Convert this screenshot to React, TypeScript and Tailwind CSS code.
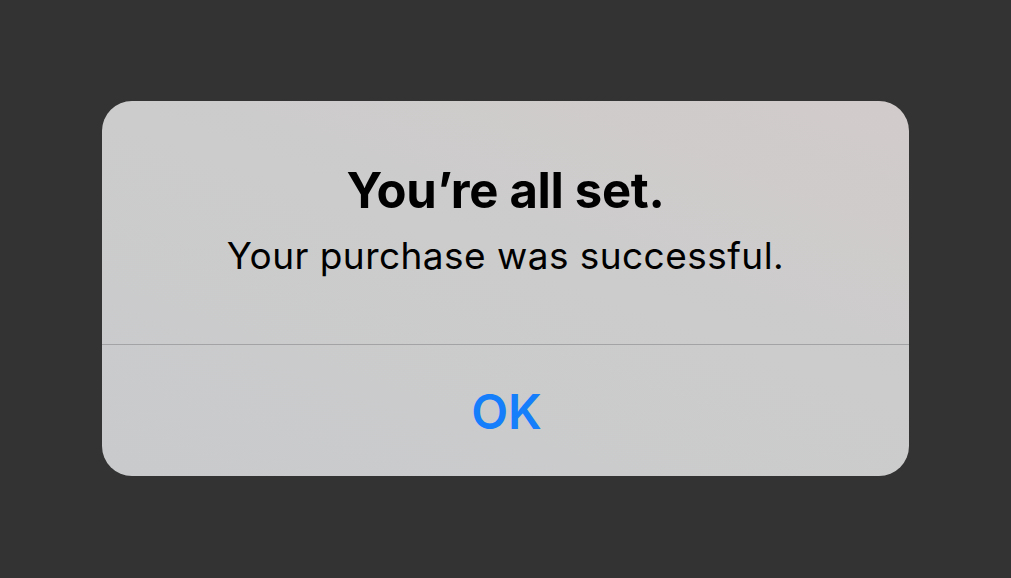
export default function App() {
  return (
    <div className="w-[1011px] h-[578px] bg-[#333333] flex items-start justify-center pt-[101px]">
      <div className="w-[807px] h-[375px] rounded-[30px] overflow-hidden flex flex-col bg-[linear-gradient(200deg,#d2cbcb_0%,#cccccc_45%,#c9cacc_100%)] font-['Inter','Liberation_Sans',sans-serif]">
        <div className="h-[243px] flex flex-col items-center pt-[60px]">
          <h1 className="text-[49px] leading-[59px] font-bold text-black tracking-[-0.3px]">
            You’re all set.
          </h1>
          <p className="mt-[13px] text-[37px] leading-[45px] text-black tracking-[0.45px]">
            Your purchase was successful.
          </p>
        </div>
        <div className="h-px bg-[#a3a3a5]" />
        <button className="flex-1 flex items-center justify-center pt-[3px] pl-[2px] text-[48px] font-semibold text-[#147efb]">
          OK
        </button>
      </div>
    </div>
  );
}
